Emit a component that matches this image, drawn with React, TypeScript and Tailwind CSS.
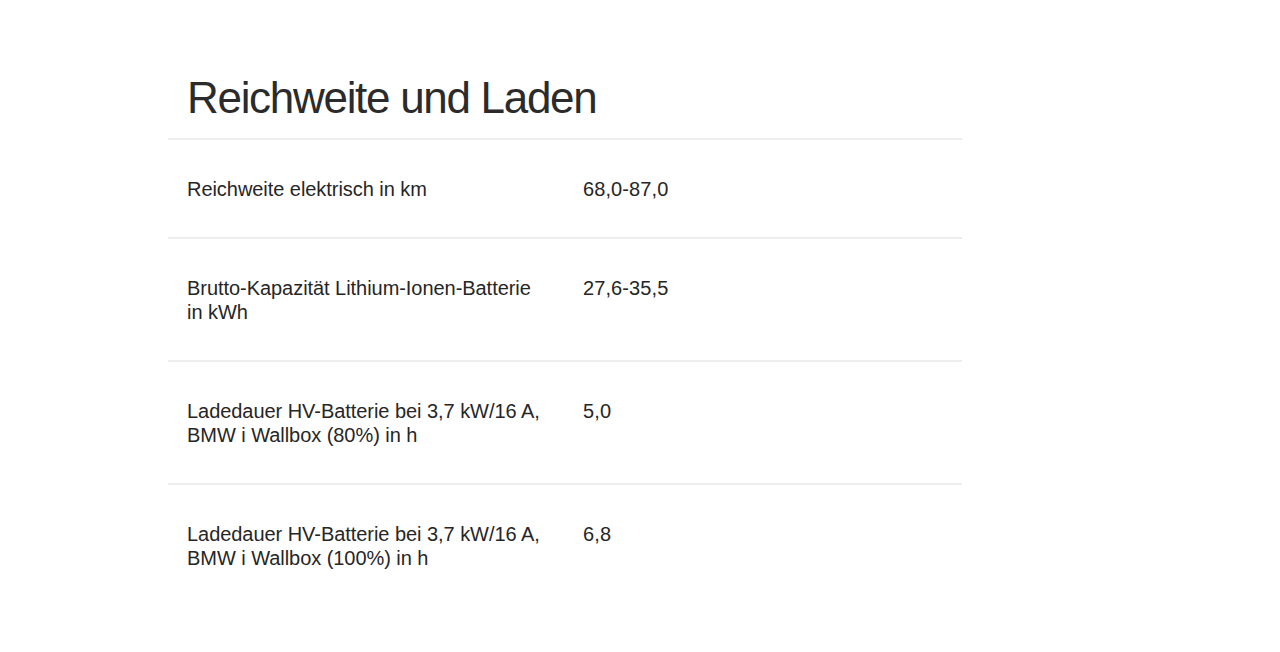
import React from 'react';

interface SpecRow {
    label: React.ReactNode;
    value: string;
}

const rows: SpecRow[] = [
    { label: 'Reichweite elektrisch in km', value: '68,0-87,0' },
    { label: <>Brutto-Kapazität Lithium-Ionen-Batterie<br />in kWh</>, value: '27,6-35,5' },
    { label: <>Ladedauer HV-Batterie bei 3,7 kW/16 A,<br />BMW i Wallbox (80%) in h</>, value: '5,0' },
    { label: <>Ladedauer HV-Batterie bei 3,7 kW/16 A,<br />BMW i Wallbox (100%) in h</>, value: '6,8' },
];

export default function App() {
    return (
        <div className="min-h-[652px] bg-white text-[#262626] font-['Liberation_Sans',Arial,sans-serif]">
            <div className="ml-[168px] w-[794px] pt-[73px]">
                <h2 className="pl-[19px] pb-[15px] text-[44px] leading-[50px] font-normal tracking-[-1.3px] text-[#2b2b2b]">
                    Reichweite und Laden
                </h2>
                <div>
                    {rows.map((row, i) => (
                        <div
                            key={i}
                            className="flex border-t-[2px] border-[#eeeeee] pl-[19px] pt-[37px] pb-[36px] text-[20px] leading-[24px] tracking-[-0.05px]"
                        >
                            <div className="w-[396px] shrink-0">{row.label}</div>
                            <div className="tracking-[0.1px]">{row.value}</div>
                        </div>
                    ))}
                </div>
            </div>
        </div>
    );
}
